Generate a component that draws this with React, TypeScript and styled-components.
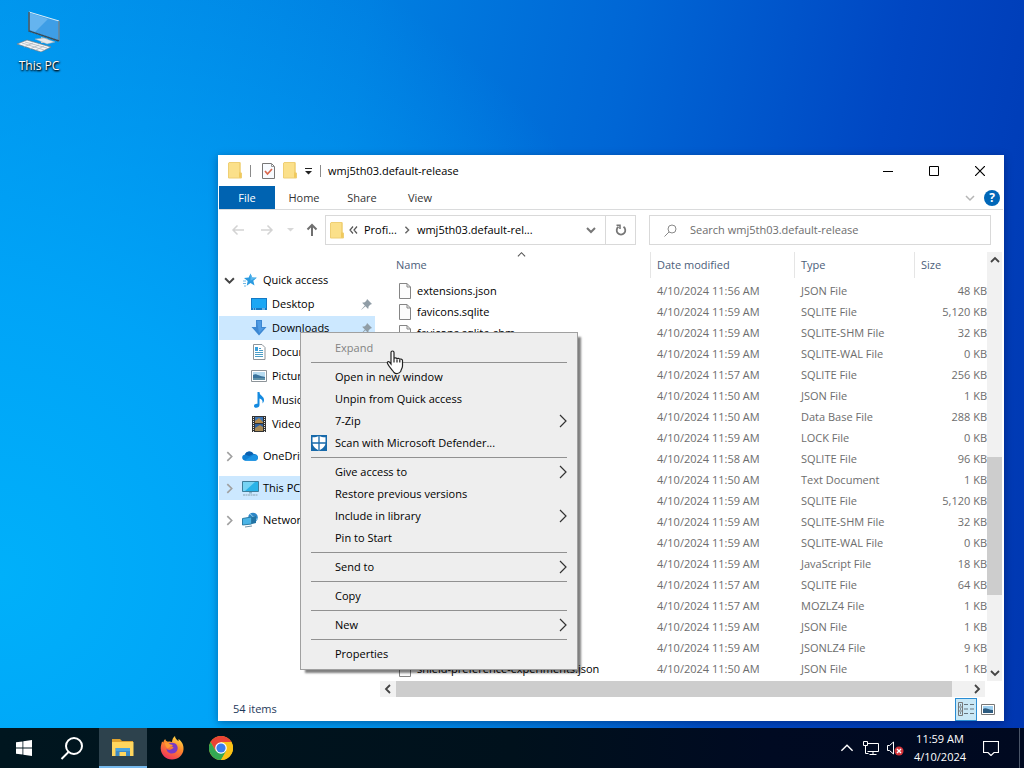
import type { ReactNode } from 'react'
import styled, { createGlobalStyle } from 'styled-components'

const GlobalStyle = createGlobalStyle`
  * {
    box-sizing: border-box;
  }
  body {
    margin: 0;
    font-family: 'Open Sans', 'Noto Sans', sans-serif;
    font-size: 11px;
    line-height: 16px;
    color: #000;
  }
  button,
  input {
    font: inherit;
    color: inherit;
    margin: 0;
    padding: 0;
    border: 0;
    background: none;
  }
  svg {
    display: block;
    flex: none;
  }
`

const Screen = styled.div`
  display: grid;
  grid-template-rows: 1fr 40px;
  height: 100vh;
  overflow: hidden;
  background:
    radial-gradient(ellipse 70% 90% at 0% 75%, #00b0fa 0%, rgba(0, 168, 250, 0.85) 40%, rgba(0, 150, 240, 0) 100%),
    linear-gradient(100deg, #0091ea 0%, #007fe1 32%, #0066d5 55%, #0047c3 78%, #0036b0 100%);
`

const Desktop = styled.main`
  position: relative;
`

const DesktopShortcut = styled.button`
  display: flex;
  flex-direction: column;
  align-items: center;
  gap: 6px;
  width: 78px;
  padding-top: 10px;
  color: #fff;
  font-size: 12px;
  text-shadow: 1px 1px 2px #000, 0 1px 2px #000;
`

/* explorer window */

const Window = styled.section`
  position: absolute;
  top: 155px;
  right: 20px;
  bottom: 7px;
  left: 218px;
  display: flex;
  flex-direction: column;
  padding: 0 1px;
  background: #fff;
  box-shadow: 0 2px 8px rgba(0, 0, 40, 0.35);
`

const TitleBar = styled.header`
  display: flex;
  height: 31px;
  align-items: center;
`

const QuickTools = styled.div`
  display: flex;
  align-items: center;
  gap: 8px;
  padding: 0 7px 0 9px;
`

const Divider = styled.span<{ $wide?: boolean }>`
  width: 1px;
  height: 12px;
  margin-right: ${({ $wide }) => ($wide ? '3px' : '0')};
  background: #8a8a8a;
`

const Title = styled.h1`
  flex: 1;
  margin: 0;
  font-size: 11px;
  font-weight: 400;
`

const CaptionButton = styled.button`
  display: grid;
  place-items: center;
  width: 46px;
  height: 30px;
`

const Ribbon = styled.nav`
  display: flex;
  height: 24px;
  align-items: center;
  border-bottom: 1px solid #dadbdc;
  padding-right: 3px;
`

const RibbonTab = styled.button<{ $file?: boolean }>`
  width: ${({ $file }) => ($file ? '56px' : '58px')};
  height: 23px;
  color: ${({ $file }) => ($file ? '#fff' : '#333')};
  background: ${({ $file }) => ($file ? '#0063b1' : 'transparent')};
`

const RibbonEnd = styled.div`
  display: flex;
  align-items: center;
  gap: 9px;
  margin-left: auto;
`

const Help = styled.button`
  width: 16px;
  height: 16px;
  border-radius: 8px;
  background: #0067b8;
  color: #fff;
  font-size: 12px;
  font-weight: 700;
`

const AddressRow = styled.div`
  display: flex;
  height: 40px;
  align-items: center;
  padding: 0 12px;
`

const NavButtons = styled.div`
  display: grid;
  grid-template-columns: 29px 27px 18px 20px;
  align-items: center;
`

const AddressBox = styled.div`
  display: flex;
  flex: 1 1 311px;
  height: 30px;
  align-items: center;
  border: 1px solid #d9d9d9;
  padding-left: 4px;
`

const Crumbs = styled.div`
  display: flex;
  flex: 1;
  align-items: center;
  gap: 6px;
  margin-left: 5px;
  white-space: nowrap;
`

const BoxButton = styled.button<{ $bordered?: boolean }>`
  display: grid;
  place-items: center;
  width: ${({ $bordered }) => ($bordered ? '30px' : '28px')};
  height: 28px;
  border-left: ${({ $bordered }) => ($bordered ? '1px solid #d9d9d9' : '0')};
`

const SearchBox = styled.label`
  display: flex;
  flex: 1 1 342px;
  height: 30px;
  align-items: center;
  gap: 13px;
  margin-left: 13px;
  border: 1px solid #d9d9d9;
  padding-left: 14px;
`

const SearchInput = styled.input`
  flex: 1;
  min-width: 0;
  outline: 0;
  &::placeholder {
    color: #6d6d6d;
    opacity: 1;
  }
`

const Body = styled.div`
  display: grid;
  grid-template-columns: 157px 1fr;
  flex: 1;
  min-height: 0;
`

const Tree = styled.nav`
  display: flex;
  flex-direction: column;
  gap: 8px;
  padding-top: 18px;
`

const TreeRow = styled.button<{ $child?: boolean; $active?: boolean }>`
  display: flex;
  align-items: center;
  width: 156px;
  height: 24px;
  padding-left: ${({ $child }) => ($child ? '25px' : '5px')};
  padding-right: 3px;
  text-align: left;
  background: ${({ $active }) => ($active ? '#cce8ff' : 'transparent')};
  > svg:last-child {
    margin-left: auto;
  }
`

const TreeIcon = styled.span`
  display: grid;
  place-items: center;
  width: 16px;
  height: 16px;
  margin: 0 5px 0 7px;
`

const ListPane = styled.div`
  display: grid;
  grid-template-columns: 1fr 16px;
  grid-template-rows: 1fr 16px;
  min-width: 0;
  padding-left: 4px;
  min-height: 0;
`

const TableArea = styled.div`
  min-width: 0;
  overflow: hidden;
  padding-left: 10px;
`

const FileTable = styled.table`
  width: 100%;
  table-layout: fixed;
  border-collapse: collapse;
`

const HeadCell = styled.th<{ $width?: number }>`
  position: relative;
  width: ${({ $width }) => ($width ? `${$width}px` : 'auto')};
  height: 30px;
  padding: 0 0 0 6px;
  font-weight: 400;
  text-align: left;
  color: #4c607a;
  background: linear-gradient(#e5e5e5, #e5e5e5) no-repeat right 2px / 1px 26px;
  &:last-child {
    background: none;
  }
`

const SortMark = styled.span`
  position: absolute;
  top: 0;
  left: 50%;
  margin-left: -4px;
`

const Cell = styled.td<{ $align?: string }>`
  height: 21px;
  padding: 0 0 0 6px;
  color: #6d6d6d;
  text-align: ${({ $align }) => $align || 'left'};
  white-space: nowrap;
`

const FileName = styled.span`
  display: flex;
  align-items: center;
  gap: 6px;
  padding-left: 3px;
  color: #000;
`

const ScrollTrack = styled.div<{ $vertical?: boolean }>`
  display: flex;
  flex-direction: ${({ $vertical }) => ($vertical ? 'column' : 'row')};
  background: #f1f1f1;
  margin: ${({ $vertical }) => ($vertical ? '2px 1px 0 0' : '0 2px 0 0')};
`

const ScrollArrow = styled.button`
  display: grid;
  place-items: center;
  flex: none;
  width: 16px;
  height: 16px;
`

const ScrollSpace = styled.span<{ $grow: number }>`
  flex: ${({ $grow }) => $grow};
`

const ScrollThumb = styled.span<{ $grow: number }>`
  flex: ${({ $grow }) => $grow};
  background: #cdcdcd;
`

const StatusBar = styled.footer`
  display: flex;
  height: 24px;
  align-items: center;
  padding: 0 4px 0 14px;
  color: #1e395b;
  > :nth-child(2) {
    margin-left: auto;
  }
`

const ViewButton = styled.button<{ $active?: boolean }>`
  display: grid;
  place-items: center;
  width: 22px;
  height: 23px;
  border: 1px solid ${({ $active }) => ($active ? '#2a8dd4' : 'transparent')};
  background: ${({ $active }) => ($active ? '#c9e8f6' : 'transparent')};
`

/* context menu */

const Menu = styled.div`
  position: absolute;
  top: 332px;
  left: 300px;
  width: 278px;
  border: 1px solid #a0a0a0;
  padding: 4px 10px;
  background: #eee;
  box-shadow: 4px 4px 2px -1px rgba(0, 0, 0, 0.5);
`

const MenuItem = styled.button`
  display: grid;
  grid-template-columns: 24px 1fr 8px;
  align-items: center;
  width: 100%;
  height: 22px;
  text-align: left;
  &:disabled {
    color: #838383;
  }
`

const MenuRule = styled.hr`
  height: 1px;
  margin: 3px 0;
  border: 0;
  background: #919191;
`

const Pointer = styled.svg`
  position: absolute;
  top: 350px;
  left: 386px;
`

/* taskbar */

const Taskbar = styled.footer`
  position: relative;
  display: flex;
  align-items: center;
  background: linear-gradient(90deg, #00161f, #00111c 50%, #000a22 75%, #000920);
  color: #fff;
`

const PinnedApps = styled.div`
  display: flex;
  gap: 1px;
  margin-left: 3px;
`

const TaskButton = styled.button<{ $active?: boolean }>`
  display: grid;
  place-items: center;
  width: 48px;
  height: 40px;
  background: ${({ $active }) => ($active ? '#2d424d' : 'transparent')};
  border-bottom: ${({ $active }) => ($active ? '2px solid #76b9ed' : '0')};
`

const Tray = styled.div`
  display: flex;
  align-items: center;
  gap: 8px;
  margin-left: auto;
  height: 40px;
`

const TrayButton = styled.button`
  display: grid;
  place-items: center;
  min-width: 16px;
  height: 40px;
`

const Clock = styled.time`
  width: 54px;
  margin: 0 8px 0 1px;
  line-height: 18px;
  text-align: center;
  white-space: nowrap;
`

const ShowDesktop = styled.button`
  width: 5px;
  height: 40px;
  margin-left: 12px;
  border-left: 1px solid #4a5568;
`

type ChevronProps = {
  dir: 'up' | 'down' | 'left' | 'right'
  size?: number
  color?: string
  weight?: number
}

const angles = { down: 0, left: 90, up: 180, right: 270 }

function Chevron({ dir, size = 10, color = '#444', weight = 1.8 }: ChevronProps) {
  return (
    <svg width={size} height={size} viewBox="0 0 10 10" fill="none">
      <path
        d="M1 3l4 4 4-4"
        stroke={color}
        strokeWidth={weight}
        transform={`rotate(${angles[dir]} 5 5)`}
      />
    </svg>
  )
}

function FolderIcon() {
  return (
    <svg width="14" height="17" viewBox="0 0 14 17">
      <path d="M1 .5h11v11l1 1.500V16H1z" fill="#fbe08a" />
      <path d="M11 10l2.500 1v5H11z" fill="#f0c95c" />
      <path d="M12 .5v11" stroke="#f0cd69" />
      <path d="M.5 1v15h13v-5L12 10V.5H1z" fill="none" stroke="#efcf74" />
    </svg>
  )
}

function PageIcon() {
  return (
    <svg width="12" height="16" viewBox="0 0 12 16">
      <path d="M.5.5h7.5l3.500 3.500v11.500H.5z" fill="#fcfcfc" stroke="#858585" />
      <path d="M8 .5V4h3.500" fill="none" stroke="#858585" />
    </svg>
  )
}

function CheckPageIcon() {
  return (
    <svg width="13" height="16" viewBox="0 0 13 16">
      <path d="M.5.5h9l3 3v12H.5z" fill="#f8fbff" stroke="#777" />
      <path d="M9.500.5v3h3" fill="none" stroke="#999" />
      <path d="M3 8l2.500 3L10 6" fill="none" stroke="#d9694f" strokeWidth="1.700" />
    </svg>
  )
}

function ArrowIcon({ dir, color }: { dir: 'left' | 'right' | 'up'; color: string }) {
  const turn = { left: 0, up: 90, right: 180 }[dir]
  return (
    <svg width="14" height="14" viewBox="0 0 14 14" fill="none">
      <path
        d="M13 7H2M6.500 2.500L2 7l4.500 4.500"
        stroke={color}
        strokeWidth={dir === 'up' ? 2 : 1.5}
        transform={`rotate(${turn} 7 7)`}
      />
    </svg>
  )
}

function PinIcon() {
  return (
    <svg width="11" height="11" viewBox="0 0 10 10">
      <path d="M5.500 0L10 4.500 8.700 5 7 6.500 6.500 9 4 6.500.5 9.700.3 9.500 3.500 6 1 3.500 3.500 3 5 1.300z" fill="#909da6" />
    </svg>
  )
}

function StarIcon() {
  return (
    <svg width="14" height="14" viewBox="0 0 14 14">
      <path d="M7.500.5l1.700 4 4.600.2-3.500 3 1.200 4.800-4-2.500-3.800 2.800 1-4.800L1 5l4.700-.4z" fill="#2b9be0" />
      <path d="M7.500.5l1.700 4 4.600.2-6.300 3z" fill="#5ab8ee" />
      <path d="M0 8h3M0 10.500h3M1 13h2" stroke="#71b9e6" />
    </svg>
  )
}

function DesktopIcon() {
  return (
    <svg width="16" height="12" viewBox="0 0 16 12">
      <path d="M0 0h16v12H0z" fill="#1479c4" />
      <path d="M1 1h14v9H1z" fill="#1ca7f4" />
      <path d="M2 11h1M4 11h1M11 11h3" stroke="#bfe6ff" />
    </svg>
  )
}

function DownloadIcon() {
  return (
    <svg width="16" height="16" viewBox="0 0 16 16">
      <path d="M5 0h6v7h4.500L8 15.500.5 7H5z" fill="#3c87d2" />
      <path d="M6 1h4v7h3L8 13z" fill="#4f9be4" />
    </svg>
  )
}

function DocumentIcon() {
  return (
    <svg width="16" height="16" viewBox="0 0 16 16">
      <path d="M2.500.5H11l3 3v12H2.500z" fill="#fff" stroke="#8c949a" />
      <path d="M4 3h3v4H4z" fill="#3aa0de" />
      <path d="M8 4.500h2M8 6.500h4M4 8.500h8M4 10.500h8M4 12.500h8" stroke="#4c9ec6" />
    </svg>
  )
}

function PictureIcon() {
  return (
    <svg width="16" height="12" viewBox="0 0 16 12">
      <path d="M.5.5h15v11H.5z" fill="#fff" stroke="#8d9499" />
      <path d="M2 2h12v8H2z" fill="#b7dcf1" />
      <path d="M2 5c3-2 5 1 12 2v3H2z" fill="#39739c" />
      <path d="M2 8h12v2H2z" fill="#5e91a8" />
    </svg>
  )
}

function MusicIcon() {
  return (
    <svg width="16" height="16" viewBox="0 0 16 16">
      <path d="M6.500 0h2c0 4 5 4 4.500 8.500-.2 1.500-.8 2-1.500 3 .5-3.500-1-4.500-3-5V13c0 1.800-1.500 2.800-3.200 2.800C3.700 15.800 3 15 3 14c0-1.500 1.600-2.500 3.500-2.200z" fill="#148ae0" />
    </svg>
  )
}

function VideoIcon() {
  return (
    <svg width="14" height="16" viewBox="0 0 14 16">
      <path d="M0 0h14v16H0z" fill="#333" />
      <path d="M3 1h8v6H3z" fill="#3f77b8" />
      <path d="M3 5l4-3 4 4v1H3z" fill="#b48b4c" />
      <path d="M3 8h8v7H3z" fill="#2f5f9d" />
      <path d="M3 12l5-3 3 2v4H3z" fill="#a98a55" />
      <path d="M1.500 1v15M12.500 1v15" stroke="#e8e8e8" strokeDasharray="1 1" />
    </svg>
  )
}

function OneDriveIcon() {
  return (
    <svg width="16" height="12" viewBox="0 0 16 12">
      <path d="M2.500 10.500C-.8 9.500-.5 5 3 4.500 4 1 9.500 0 11.500 4c3 0 4.500 1.500 4.500 3.500s-1.500 3.200-3 3.200z" fill="#1180d3" />
      <path d="M3 4.500C4 1 9.500 0 11.500 4L7 6z" fill="#0b5fae" />
      <path d="M2.500 10.500L11.500 5c3-.5 4.500 1 4.500 2.800 0 1.500-1 2.900-3 2.900H3z" fill="#1c94e4" />
    </svg>
  )
}

function ComputerIcon() {
  return (
    <svg width="17" height="16" viewBox="0 0 17 16">
      <path d="M.5 1.500h16v10H.5z" fill="#29b3e8" stroke="#3f7e9a" />
      <path d="M1 2h12L3 11H1z" fill="#77d4f4" />
      <path d="M7 12h3v1.500H7z" fill="#8fb3c4" />
      <path d="M1 15h15" stroke="#8ca2ae" strokeDasharray="2 .5" />
    </svg>
  )
}

function NetworkIcon() {
  return (
    <svg width="17" height="16" viewBox="0 0 17 16">
      <circle cx="11" cy="5.500" r="4.800" fill="#2c86c6" />
      <path d="M8 2c3 1 1 3 4 3s1 4 4 2" stroke="#9ad3ef" fill="none" />
      <path d="M.5 6.500l9-1.500v7l-9 1z" fill="#4bb4e6" stroke="#2c7ca6" />
      <path d="M10 5l4-1v7l-4 1z" fill="#2273a4" />
      <path d="M3 15l7-1" stroke="#7393a5" />
    </svg>
  )
}

function ShieldIcon() {
  return (
    <svg width="16" height="16" viewBox="0 0 16 16">
      <path d="M0 0h16v16H0z" fill="#1769aa" />
      <path d="M8 1c2 1 3.500 1.300 6.500 1.300V8c0 3-3 6-6.500 7.500C4.500 14 1.500 11 1.500 8V2.300C4.500 2.300 6 2 8 1z" fill="#fff" />
      <path d="M8 1v14M1 8h14" stroke="#1769aa" strokeWidth="1.300" />
    </svg>
  )
}

function PcShortcutIcon() {
  return (
    <svg width="44" height="42" viewBox="0 0 44 42">
      <path d="M12 2l30 9v20L12 21z" fill="#3e9ee6" stroke="#d9edf8" />
      <path d="M12 2v19l30 10" fill="none" stroke="#304b5e" strokeWidth="1.500" />
      <path d="M13 3l18 6-13 13-5-2z" fill="#76bdf2" opacity=".7" />
      <path d="M42 11v20" stroke="#334f62" />
      <path d="M24 27l7 2v4h-7z" fill="#c5cdd3" />
      <path d="M18 29l9-1 11 4-8 2z" fill="#e5e9ec" stroke="#8fa2af" strokeWidth=".5" />
      <path d="M0 34l10-4 24 7-10 5z" fill="#f5f6f7" stroke="#707b84" strokeWidth=".7" />
      <path d="M5 33l22 7M8 32l22 6M7 37l9-4M13 39l9-4M19 40l8-4" stroke="#aeb8bf" strokeWidth=".8" />
    </svg>
  )
}

function WindowsIcon() {
  return (
    <svg width="16" height="16" viewBox="0 0 16 16">
      <path d="M0 2.300L6.500 1.400v6.200H0zM7.300 1.300L16 0v7.600H7.300zM0 8.400h6.500v6.200L0 13.700zM7.300 8.400H16V16l-8.700-1.300z" fill="#fff" />
    </svg>
  )
}

function TaskSearchIcon() {
  return (
    <svg width="24" height="24" viewBox="0 0 24 24" fill="none">
      <circle cx="14" cy="10" r="8" stroke="#fff" strokeWidth="2" />
      <path d="M8.500 16L1.500 23" stroke="#fff" strokeWidth="2" />
    </svg>
  )
}

function ExplorerIcon() {
  return (
    <svg width="22" height="19" viewBox="0 0 22 19">
      <path d="M0 1h8l2 2h11v4H0z" fill="#dfa22e" />
      <path d="M0 4h21.500v14H0z" fill="#ffd65e" />
      <path d="M3.500 18v-8h14.500v8h-4v-4h-6.500v4z" fill="#3c8ac6" />
      <path d="M4 10h14v3H4z" fill="#4aa4df" />
    </svg>
  )
}

function FirefoxIcon() {
  return (
    <svg width="24" height="24" viewBox="0 0 24 24">
      <defs>
        <linearGradient id="fox" x1="0.8" y1="0" x2="0.3" y2="1">
          <stop offset="0" stopColor="#ffe34a" />
          <stop offset=".45" stopColor="#ff8a2b" />
          <stop offset="1" stopColor="#f0305d" />
        </linearGradient>
      </defs>
      <path d="M15 0c0 2 1.500 3.500 3.500 5.200 0-1 .1-1.500-.2-2.200C22 5 24 9.500 23.500 13.500 23 19.500 18 23.500 12 23.500S1 19 .7 12.800C.6 10 1.500 8 2 5.500l1.400 1C3.500 5 4.200 4 5.300 3c.1 1.500 1 2.400 2.700 2.700C9.500 5.200 11 5.500 12 6c.3-2.500 1-4.600 3-6z" fill="url(#fox)" />
      <path d="M8 8c3-2 8-1.500 9.300 2 1.500 4-1.500 7.500-5.300 7.500-3.500 0-5.500-2.500-5.500-5 1.300 1.800 3.300 1.700 4.800.7l2.200-1.200c0-1.200-2-1.500-3.500-1.500C9 10 8 9.500 8 8z" fill="#7a3bc4" />
      <path d="M5 7c2-.5 4 .2 5 1.300L12.500 9c.5 1-.5 1.500-2 1.500-1 1-2 .8-2.500 2-1.500-.5-3-2.500-3-5.500z" fill="#ff9a35" />
    </svg>
  )
}

function ChromeIcon() {
  return (
    <svg width="24" height="24" viewBox="0 0 24 24">
      <circle cx="12" cy="12" r="12" fill="#fbc116" />
      <path d="M1.600 6A12 12 0 0 1 22.400 6H12L6.800 15z" fill="#ea4335" />
      <path d="M1.600 6A12 12 0 0 0 12 24l5.200-9H6.800z" fill="#34a853" />
      <path d="M22.400 6A12 12 0 0 1 12 24l5.200-9L12 6z" fill="#fbc116" />
      <circle cx="12" cy="12" r="5.800" fill="#fff" />
      <circle cx="12" cy="12" r="4.600" fill="#3b7ded" />
    </svg>
  )
}

type FileRow = { name?: string; time: string; type: string; size: string }

const files: FileRow[] = [
  { name: 'extensions.json', time: '11:56 AM', type: 'JSON File', size: '48 KB' },
  { name: 'favicons.sqlite', time: '11:59 AM', type: 'SQLITE File', size: '5,120 KB' },
  { name: 'favicons.sqlite-shm', time: '11:59 AM', type: 'SQLITE-SHM File', size: '32 KB' },
  { time: '11:59 AM', type: 'SQLITE-WAL File', size: '0 KB' },
  { time: '11:57 AM', type: 'SQLITE File', size: '256 KB' },
  { time: '11:50 AM', type: 'JSON File', size: '1 KB' },
  { time: '11:50 AM', type: 'Data Base File', size: '288 KB' },
  { time: '11:59 AM', type: 'LOCK File', size: '0 KB' },
  { time: '11:58 AM', type: 'SQLITE File', size: '96 KB' },
  { time: '11:50 AM', type: 'Text Document', size: '1 KB' },
  { time: '11:59 AM', type: 'SQLITE File', size: '5,120 KB' },
  { time: '11:59 AM', type: 'SQLITE-SHM File', size: '32 KB' },
  { time: '11:59 AM', type: 'SQLITE-WAL File', size: '0 KB' },
  { time: '11:59 AM', type: 'JavaScript File', size: '18 KB' },
  { time: '11:57 AM', type: 'SQLITE File', size: '64 KB' },
  { time: '11:57 AM', type: 'MOZLZ4 File', size: '1 KB' },
  { time: '11:59 AM', type: 'JSON File', size: '1 KB' },
  { time: '11:59 AM', type: 'JSONLZ4 File', size: '9 KB' },
  { name: 'shield-preference-experiments.json', time: '11:50 AM', type: 'JSON File', size: '1 KB' },
]

type MenuEntry = { label: string; sub?: boolean; disabled?: boolean; icon?: ReactNode }

const menuGroups: MenuEntry[][] = [
  [{ label: 'Expand', disabled: true }],
  [
    { label: 'Open in new window' },
    { label: 'Unpin from Quick access' },
    { label: '7-Zip', sub: true },
    { label: 'Scan with Microsoft Defender...', icon: <ShieldIcon /> },
  ],
  [
    { label: 'Give access to', sub: true },
    { label: 'Restore previous versions' },
    { label: 'Include in library', sub: true },
    { label: 'Pin to Start' },
  ],
  [{ label: 'Send to', sub: true }],
  [{ label: 'Copy' }],
  [{ label: 'New', sub: true }],
  [{ label: 'Properties' }],
]

const pinned: { label: string; icon: ReactNode; pin?: boolean; active?: boolean }[] = [
  { label: 'Desktop', icon: <DesktopIcon />, pin: true },
  { label: 'Downloads', icon: <DownloadIcon />, pin: true, active: true },
  { label: 'Documents', icon: <DocumentIcon /> },
  { label: 'Pictures', icon: <PictureIcon /> },
  { label: 'Music', icon: <MusicIcon /> },
  { label: 'Videos', icon: <VideoIcon /> },
]

const roots = [
  { label: 'OneDrive', icon: <OneDriveIcon /> },
  { label: 'This PC', icon: <ComputerIcon />, active: true },
  { label: 'Network', icon: <NetworkIcon /> },
]

function NavTree() {
  return (
    <Tree>
      <div>
        <TreeRow>
          <Chevron dir="down" size={11} />
          <TreeIcon>
            <StarIcon />
          </TreeIcon>
          <span>Quick access</span>
        </TreeRow>
        {pinned.map(({ label, icon, pin, active }) => (
          <TreeRow key={label} $child $active={active}>
            <TreeIcon>{icon}</TreeIcon>
            <span>{label}</span>
            {pin && <PinIcon />}
          </TreeRow>
        ))}
      </div>
      {roots.map(({ label, icon, active }) => (
        <TreeRow key={label} $active={active}>
          <Chevron dir="right" size={11} color="#a0a0a0" weight={1.5} />
          <TreeIcon>{icon}</TreeIcon>
          <span>{label}</span>
        </TreeRow>
      ))}
    </Tree>
  )
}

function FileList() {
  return (
    <ListPane>
      <TableArea>
        <FileTable>
          <thead>
            <tr>
              <HeadCell>
                Name
                <SortMark>
                  <Chevron dir="up" size={9} color="#555" weight={1.2} />
                </SortMark>
              </HeadCell>
              <HeadCell $width={144}>Date modified</HeadCell>
              <HeadCell $width={120}>Type</HeadCell>
              <HeadCell $width={72}>Size</HeadCell>
            </tr>
          </thead>
          <tbody>
            {files.map(({ name, time, type, size }, i) => (
              <tr key={i}>
                <Cell>
                  <FileName>
                    <PageIcon />
                    {name}
                  </FileName>
                </Cell>
                <Cell>4/10/2024 {time}</Cell>
                <Cell>{type}</Cell>
                <Cell $align="right">{size}</Cell>
              </tr>
            ))}
          </tbody>
        </FileTable>
      </TableArea>
      <ScrollTrack $vertical>
        <ScrollArrow aria-label="Scroll up">
          <Chevron dir="up" />
        </ScrollArrow>
        <ScrollSpace $grow={189} />
        <ScrollThumb $grow={137} />
        <ScrollSpace $grow={70} />
        <ScrollArrow aria-label="Scroll down">
          <Chevron dir="down" />
        </ScrollArrow>
      </ScrollTrack>
      <ScrollTrack>
        <ScrollArrow aria-label="Scroll left">
          <Chevron dir="left" />
        </ScrollArrow>
        <ScrollThumb $grow={556} />
        <ScrollSpace $grow={17} />
        <ScrollArrow aria-label="Scroll right">
          <Chevron dir="right" />
        </ScrollArrow>
      </ScrollTrack>
    </ListPane>
  )
}

function ExplorerWindow() {
  return (
    <Window>
      <TitleBar>
        <QuickTools>
          <FolderIcon />
          <Divider $wide />
          <CheckPageIcon />
          <FolderIcon />
          <svg width="7" height="8" viewBox="0 0 7 8">
            <path d="M0 1h7v1H0zM0 4h7L3.500 7.500z" fill="#222" />
          </svg>
          <Divider />
        </QuickTools>
        <Title>wmj5th03.default-release</Title>
        <CaptionButton aria-label="Minimize">
          <svg width="10" height="10" viewBox="0 0 10 10">
            <path d="M0 5.500h10" stroke="#000" />
          </svg>
        </CaptionButton>
        <CaptionButton aria-label="Maximize">
          <svg width="10" height="10" viewBox="0 0 10 10">
            <path d="M.5.5h9v9h-9z" fill="none" stroke="#000" />
          </svg>
        </CaptionButton>
        <CaptionButton aria-label="Close">
          <svg width="10" height="10" viewBox="0 0 10 10">
            <path d="M0 0l10 10M10 0L0 10" stroke="#000" strokeWidth="1.200" />
          </svg>
        </CaptionButton>
      </TitleBar>
      <Ribbon>
        <RibbonTab $file>File</RibbonTab>
        <RibbonTab>Home</RibbonTab>
        <RibbonTab>Share</RibbonTab>
        <RibbonTab>View</RibbonTab>
        <RibbonEnd>
          <Chevron dir="down" color="#b5b5b5" weight={1.5} />
          <Help>?</Help>
        </RibbonEnd>
      </Ribbon>
      <AddressRow>
        <NavButtons>
          <button aria-label="Back">
            <ArrowIcon dir="left" color="#d3d3d3" />
          </button>
          <button aria-label="Forward">
            <ArrowIcon dir="right" color="#d3d3d3" />
          </button>
          <svg width="7" height="4" viewBox="0 0 7 4">
            <path d="M0 0h7L3.500 3.500z" fill="#d8d8d8" />
          </svg>
          <button aria-label="Up">
            <ArrowIcon dir="up" color="#707070" />
          </button>
        </NavButtons>
        <AddressBox>
          <FolderIcon />
          <Crumbs>
            <svg width="9" height="8" viewBox="0 0 9 8" fill="none">
              <path d="M4 .5L1 4l3 3.500M8 .5L5 4l3 3.500" stroke="#555" strokeWidth="1.200" />
            </svg>
            <button>Profi...</button>
            <Chevron dir="right" size={8} color="#666" />
            <button>wmj5th03.default-rel...</button>
          </Crumbs>
          <BoxButton aria-label="Previous locations">
            <Chevron dir="down" color="#777" weight={2} />
          </BoxButton>
          <BoxButton $bordered aria-label="Refresh">
            <svg width="12" height="12" viewBox="0 0 12 12" fill="none">
              <path d="M8.500 2.800A4.300 4.300 0 1 1 3.500 2.800" stroke="#777" strokeWidth="1.800" />
              <path d="M1.500 1.200H5V5" stroke="#777" strokeWidth="1.600" />
            </svg>
          </BoxButton>
        </AddressBox>
        <SearchBox>
          <svg width="13" height="13" viewBox="0 0 13 13" fill="none">
            <circle cx="8" cy="5" r="4" stroke="#8a8a8a" />
            <path d="M5 8l-4.500 4.500" stroke="#8a8a8a" />
          </svg>
          <SearchInput placeholder="Search wmj5th03.default-release" aria-label="Search" />
        </SearchBox>
      </AddressRow>
      <Body>
        <NavTree />
        <FileList />
      </Body>
      <StatusBar>
        <span>54 items</span>
        <ViewButton $active aria-label="Details">
          <svg width="16" height="14" viewBox="0 0 16 14" fill="none">
            <path d="M.5.5h4v13h-4zM.5 5h4M.5 9h4" stroke="#777" />
            <path d="M2 3h1M2 7h1M2 11h1" stroke="#333" />
            <path d="M6 2.500h4M12 2.500h4M6 7h4M12 7h4M6 11.500h4M12 11.500h4" stroke="#66757e" />
          </svg>
        </ViewButton>
        <ViewButton aria-label="Large icons">
          <svg width="14" height="11" viewBox="0 0 14 11">
            <path d="M.5.5h13v10H.5z" fill="#fff" stroke="#777" />
            <path d="M2 2h10v7H2z" fill="#9fd0f0" />
            <path d="M2 5c3-2 5 1 10 1v3H2z" fill="#2c5b80" />
          </svg>
        </ViewButton>
      </StatusBar>
    </Window>
  )
}

function ContextMenu() {
  return (
    <Menu role="menu">
      {menuGroups.map((group, i) => (
        <div key={group[0].label}>
          {i > 0 && <MenuRule />}
          {group.map(({ label, sub, disabled, icon }) => (
            <MenuItem key={label} role="menuitem" disabled={disabled}>
              <span>{icon}</span>
              <span>{label}</span>
              {sub && (
                <svg width="8" height="14" viewBox="0 0 8 14" fill="none">
                  <path d="M1 1l6 6-6 6" stroke="#333" strokeWidth="1.200" />
                </svg>
              )}
            </MenuItem>
          ))}
        </div>
      ))}
    </Menu>
  )
}

export default function App() {
  return (
    <Screen>
      <GlobalStyle />
      <Desktop>
        <DesktopShortcut>
          <PcShortcutIcon />
          This PC
        </DesktopShortcut>
        <ExplorerWindow />
        <ContextMenu />
        <Pointer width="19" height="25" viewBox="0 0 19 25">
          <path
            d="M5 2.500C5 .5 8 .5 8 2.500V9c0-1.600 3-1.500 3 .2 0-1.400 2.800-1.200 2.800.6 0-1.300 2.700-1 2.700.8V16c0 2-1.500 3.500-1.800 5.500C13 24 9.500 24 8 22.500 6.500 20 3 17 1.500 13.500c-.8-1.700 1-2.500 2-1.300L5 14z"
            fill="#fff"
            stroke="#222"
            strokeWidth="1.200"
          />
          <path d="M8 9v3.500M11 9.500v3M13.800 10v2.500" stroke="#222" strokeWidth="1.200" />
        </Pointer>
      </Desktop>
      <Taskbar>
        <TaskButton aria-label="Start">
          <WindowsIcon />
        </TaskButton>
        <TaskButton aria-label="Search">
          <TaskSearchIcon />
        </TaskButton>
        <PinnedApps>
          <TaskButton $active aria-label="File Explorer">
            <ExplorerIcon />
          </TaskButton>
          <TaskButton aria-label="Firefox">
            <FirefoxIcon />
          </TaskButton>
          <TaskButton aria-label="Chrome">
            <ChromeIcon />
          </TaskButton>
        </PinnedApps>
        <Tray>
          <TrayButton aria-label="Show hidden icons">
            <Chevron dir="up" size={14} color="#fff" weight={1} />
          </TrayButton>
          <TrayButton aria-label="Network">
            <svg width="16" height="14" viewBox="0 0 16 14" fill="none" stroke="#fff">
              <path d="M4.500 2.500h11v8H4.500M10 10.500v3M6.500 13.500h7" />
              <path d="M.5.500h4v4h-4zM2.500 4.500v8h3" />
            </svg>
          </TrayButton>
          <TrayButton aria-label="Volume">
            <svg width="17" height="15" viewBox="0 0 17 15" fill="none">
              <path d="M.5 4.500h2l4-3.500v12l-4-3.500h-2z" stroke="#fff" />
              <circle cx="12" cy="10" r="4.500" fill="#d5343a" />
              <path d="M10 8l4 4M14 8l-4 4" stroke="#fff" strokeWidth="1.400" />
            </svg>
          </TrayButton>
          <Clock>
            11:59 AM
            <br />
            4/10/2024
          </Clock>
          <TrayButton aria-label="Notifications">
            <svg width="16" height="16" viewBox="0 0 16 16" fill="none">
              <path d="M.5 1.500h15v11H11L8 15.500l-3-3H.5z" stroke="#fff" strokeWidth="1.200" />
            </svg>
          </TrayButton>
          <ShowDesktop aria-label="Show desktop" />
        </Tray>
      </Taskbar>
    </Screen>
  )
}
